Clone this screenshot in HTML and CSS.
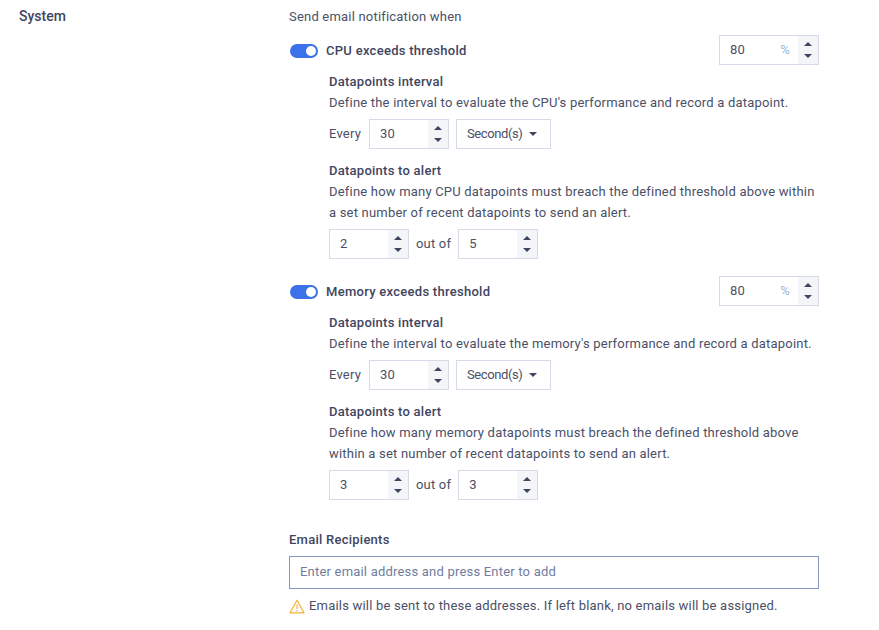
FILE: index.html
```html
<!DOCTYPE html>
<html lang="en">
<head>
  <meta charset="UTF-8" />
  <title>System notifications</title>
  <link rel="stylesheet" href="styles.css">
</head>
<body>
  <div class="section">
    <h2 class="section-title">System</h2>
    <div class="section-body">
      <div class="intro">Send email notification when</div>

      <div class="alert-block">
        <div class="alert-head">
          <label class="toggle-label"><span class="toggle"><span class="knob"></span></span>CPU exceeds threshold</label>
          <div class="spinner spinner-pct">
            <span class="value">80</span><span class="unit">%</span>
            <span class="arrows"><i class="up"></i><i class="down"></i></span>
          </div>
        </div>
        <div class="alert-body">
          <div class="field-title">Datapoints interval</div>
          <p class="desc">Define the interval to evaluate the CPU's performance and record a datapoint.</p>
          <div class="inline-row">
            <span class="every">Every</span>
            <div class="spinner"><span class="value">30</span><span class="arrows"><i class="up"></i><i class="down"></i></span></div>
            <div class="select">Second(s)<i class="caret"></i></div>
          </div>
          <div class="field-title second">Datapoints to alert</div>
          <p class="desc">Define how many CPU datapoints must breach the defined threshold above within<br>a set number of recent datapoints to send an alert.</p>
          <div class="inline-row">
            <div class="spinner"><span class="value">2</span><span class="arrows"><i class="up"></i><i class="down"></i></span></div>
            <span>out of</span>
            <div class="spinner"><span class="value">5</span><span class="arrows"><i class="up"></i><i class="down"></i></span></div>
          </div>
        </div>
      </div>

      <div class="alert-block">
        <div class="alert-head">
          <label class="toggle-label"><span class="toggle"><span class="knob"></span></span>Memory exceeds threshold</label>
          <div class="spinner spinner-pct">
            <span class="value">80</span><span class="unit">%</span>
            <span class="arrows"><i class="up"></i><i class="down"></i></span>
          </div>
        </div>
        <div class="alert-body">
          <div class="field-title">Datapoints interval</div>
          <p class="desc">Define the interval to evaluate the memory's performance and record a datapoint.</p>
          <div class="inline-row">
            <span class="every">Every</span>
            <div class="spinner"><span class="value">30</span><span class="arrows"><i class="up"></i><i class="down"></i></span></div>
            <div class="select">Second(s)<i class="caret"></i></div>
          </div>
          <div class="field-title second">Datapoints to alert</div>
          <p class="desc">Define how many memory datapoints must breach the defined threshold above<br>within a set number of recent datapoints to send an alert.</p>
          <div class="inline-row">
            <div class="spinner"><span class="value">3</span><span class="arrows"><i class="up"></i><i class="down"></i></span></div>
            <span>out of</span>
            <div class="spinner"><span class="value">3</span><span class="arrows"><i class="up"></i><i class="down"></i></span></div>
          </div>
        </div>
      </div>

      <div class="recipients">
        <div class="field-title">Email Recipients</div>
        <input class="email-input" type="text" placeholder="Enter email address and press Enter to add">
        <div class="hint">
          <svg class="warn" width="16" height="15" viewBox="0 0 16 15" fill="none" stroke="#f5b335" stroke-width="1.2" stroke-linejoin="round"><path d="M8 1.2 15 13.8H1Z"/><path d="M8 5.5V10M8 11.1V12.4"/></svg>
          <span>Emails will be sent to these addresses. If left blank, no emails will be assigned.</span>
        </div>
      </div>
    </div>
  </div>
</body>
</html>
```

FILE: styles.css
```css
* {
  margin: 0;
  padding: 0;
  box-sizing: border-box;
}

body {
  font-family: 'Roboto', sans-serif;
  font-size: 13px;
  line-height: 18px;
  letter-spacing: 0.2px;
  color: #4a5068;
  background: white;
  overflow: hidden;
}

.section {
  display: flex;
  padding: 7px 0 0 19px;
}

.section-title {
  width: 270px;
  font-size: 14px;
  font-weight: 500;
  line-height: 18px;
  letter-spacing: 0;
  color: #3f4560;
}

.section-body {
  width: 530px;
}

.intro {
  margin: 1px 0 9px;
}

.alert-block {
  margin-bottom: 17px;
}

.alert-head {
  display: flex;
  justify-content: space-between;
  align-items: center;
  height: 30px;
}

.toggle-label {
  display: flex;
  align-items: center;
  padding: 2px 0 0 1px;
  font-weight: 500;
  letter-spacing: 0.28px;
  color: #3f4560;
}

.toggle {
  display: flex;
  justify-content: flex-end;
  align-items: center;
  width: 28px;
  height: 14px;
  margin-right: 8px;
  padding-right: 2px;
  background: #3b71ea;
  border-radius: 7px;
}

.knob {
  width: 10px;
  height: 10px;
  background: white;
  border-radius: 50%;
}

.alert-body {
  padding: 8px 0 0 40px;
}

.field-title {
  font-weight: 500;
  letter-spacing: 0.25px;
  color: #3f4560;
}

.field-title.second {
  margin-top: 13px;
}

.desc {
  margin-top: 1px;
  line-height: 21px;
}

.inline-row {
  display: flex;
  align-items: center;
  gap: 7px;
  margin-top: 6px;
}

.every {
  width: 33px;
}

.spinner {
  display: flex;
  align-items: center;
  width: 80px;
  height: 30px;
  padding-left: 10px;
  border: 1px solid #d5dae6;
  background: white;
}

.spinner-pct {
  width: 100px;
}

.value {
  flex: 1;
}

.unit {
  margin-right: 8px;
  color: #9db4dc;
}

.arrows {
  display: flex;
  flex-direction: column;
  justify-content: center;
  align-items: center;
  gap: 8px;
  width: 20px;
  height: 100%;
  background: #f3f5f9;
}

.up {
  border-left: 4px solid transparent;
  border-right: 4px solid transparent;
  border-bottom: 4px solid #3f4560;
}

.down {
  border-left: 4px solid transparent;
  border-right: 4px solid transparent;
  border-top: 4px solid #3f4560;
}

.select {
  display: flex;
  align-items: center;
  width: 95px;
  height: 30px;
  padding-left: 10px;
  border: 1px solid #d5dae6;
  letter-spacing: -0.4px;
}

.caret {
  margin-left: 7px;
  border-left: 4px solid transparent;
  border-right: 4px solid transparent;
  border-top: 4px solid #3f4560;
}

.recipients {
  margin-top: 31px;
}

.email-input {
  display: block;
  width: 100%;
  height: 33px;
  margin-top: 7px;
  padding: 0 10px 2px;
  border: 1px solid #8496bd;
  font-family: inherit;
  font-size: 13px;
  letter-spacing: 0.2px;
  color: #4a5068;
  outline: none;
}

.email-input::placeholder {
  color: #6f7d9e;
  opacity: 1;
}

.hint {
  display: flex;
  align-items: center;
  gap: 4px;
  margin-top: 8px;
}
```
